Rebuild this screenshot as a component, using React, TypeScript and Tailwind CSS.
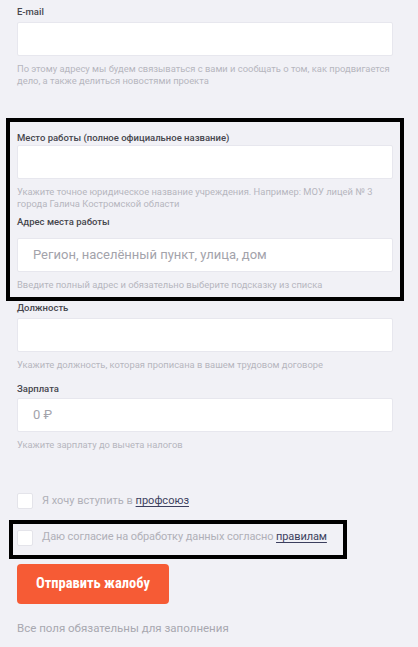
import type { ReactNode } from 'react';

const font = { fontFamily: 'Roboto, "Noto Sans", sans-serif' };

function Field({
  label,
  placeholder,
  hint,
  labelGap = 'mb-[4px]',
}: {
  label: string;
  placeholder?: string;
  hint: ReactNode;
  labelGap?: string;
}) {
  return (
    <div>
      <div className={`text-[9.5px] leading-[12px] font-medium text-[#46464d] ${labelGap}`}>{label}</div>
      <div className="h-[34px] bg-white border border-[#e7e7ee] rounded-[2px] flex items-center pl-[15px]">
        {placeholder && <span className="text-[13px] text-[#a3a3ab]">{placeholder}</span>}
      </div>
      <div className="mt-[7px] text-[9.4px] leading-[12px] text-[#b6b6be]">{hint}</div>
    </div>
  );
}

function Checkbox() {
  return <div className="w-[16px] h-[16px] shrink-0 bg-white border border-[#e4e4ea] rounded-[2px]" />;
}

export default function App() {
  return (
    <div className="min-h-screen bg-[#f1f1f6] pl-[17px] pr-[25px] pt-[6px] pb-[14px]" style={font}>
      {/* E-mail */}
      <Field
        label="E-mail"
        hint="По этому адресу мы будем связываться с вами и сообщать о том, как продвигается дело, а также делиться новостями проекта"
      />

      {/* Work place */}
      <div className="mt-[31px] -mx-[11px] border-4 border-black px-[7px] pt-[10px] pb-[6px]">
        <Field
          label="Место работы (полное официальное название)"
          labelGap="mb-[1px]"
          hint={
            <>
              Укажите точное юридическое название учреждения. Например: МОУ лицей № 3
              <br />
              города Галича Костромской области
            </>
          }
        />
        <div className="mt-[6px]">
          <Field
            label="Адрес места работы"
            labelGap="mb-[10px]"
            placeholder="Регион, населённый пункт, улица, дом"
            hint="Введите полный адрес и обязательно выберите подсказку из списка"
          />
        </div>
      </div>

      <div className="mt-[1px]">
        <Field label="Должность" hint="Укажите должность, которая прописана в вашем трудовом договоре" />
      </div>

      <div className="mt-[12px]">
        <Field label="Зарплата" labelGap="mb-[3px]" placeholder="0 ₽" hint="Укажите зарплату до вычета налогов" />
      </div>

      {/* Checkboxes */}
      <div className="mt-[42px] flex items-center gap-[9px]">
        <Checkbox />
        <span className="text-[11px] text-[#b0b0b8] whitespace-nowrap">
          Я хочу вступить в{' '}
          <a href="#" className="text-[#3c3f5e] underline underline-offset-2">
            профсоюз
          </a>
        </span>
      </div>

      <div className="mt-[10px] -ml-[8px] w-[338px] h-[39px] border-4 border-black pl-[4px] pb-[3px] flex items-center gap-[9px]">
        <Checkbox />
        <span className="text-[11px] tracking-[-0.1px] text-[#b0b0b8] whitespace-nowrap">
          Даю согласие на обработку данных согласно{' '}
          <a href="#" className="text-[#3c3f5e] underline underline-offset-2">
            правилам
          </a>
        </span>
      </div>

      <button
        className="mt-[5px] h-[40px] w-[152px] rounded-[4px] bg-[#f65b35] text-white text-[14.5px] font-bold"
        style={{ fontFamily: '"Liberation Sans Narrow", "Roboto Condensed", Roboto, sans-serif' }}
      >
        Отправить жалобу
      </button>

      <div className="mt-[17px] text-[11.5px] leading-[14px] text-[#a8a8b0]">Все поля обязательны для заполнения</div>
    </div>
  );
}
